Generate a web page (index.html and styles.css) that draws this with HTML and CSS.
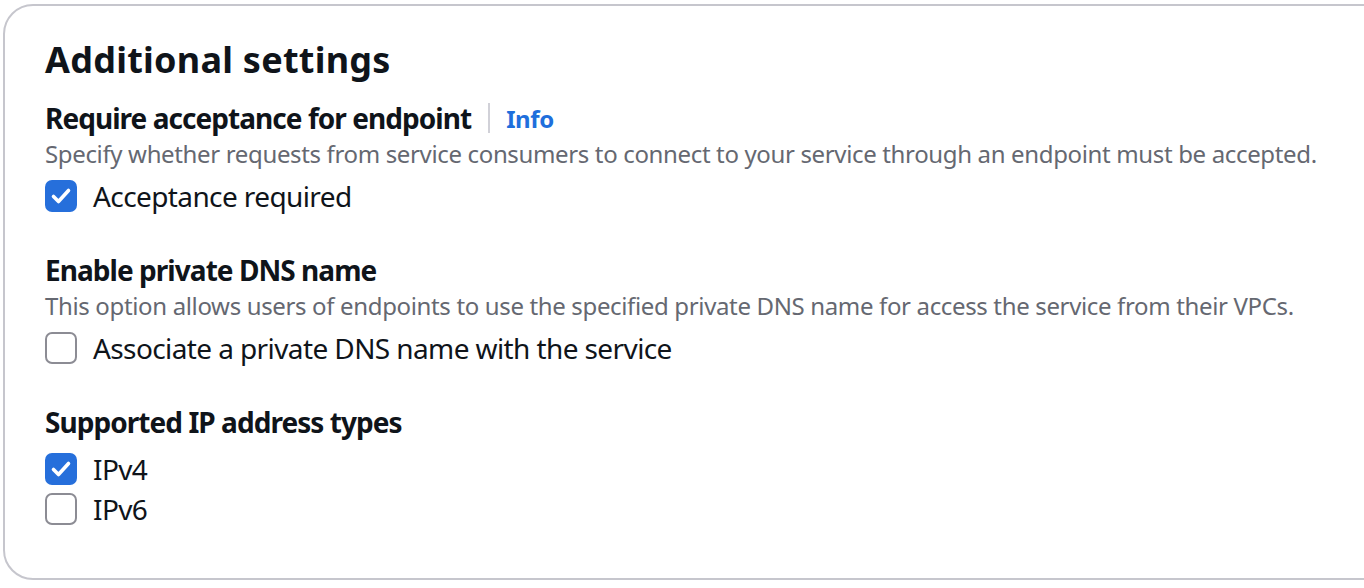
FILE: index.html
```html
<!DOCTYPE html>
<html lang="en">
<head>
<meta charset="utf-8">
<title>Additional settings</title>
<link rel="stylesheet" href="styles.css">
</head>
<body>
<section class="card">
  <h2 class="title">Additional settings</h2>

  <div class="field">
    <div class="label-row">
      <span class="label">Require acceptance for endpoint</span>
      <span class="divider"></span>
      <a class="info" href="#">Info</a>
    </div>
    <p class="desc">Specify whether requests from service consumers to connect to your service through an endpoint must be accepted.</p>
    <label class="check">
      <span class="box checked"><svg viewBox="0 0 32 32" width="32" height="32"><path d="M8.5 16.5l5 5 10-11" fill="none" stroke="#fff" stroke-width="3.6" stroke-linecap="round" stroke-linejoin="round"/></svg></span>
      <span class="check-text">Acceptance required</span>
    </label>
  </div>

  <div class="field">
    <div class="label-row">
      <span class="label">Enable private DNS name</span>
    </div>
    <p class="desc">This option allows users of endpoints to use the specified private DNS name for access the service from their VPCs.</p>
    <label class="check">
      <span class="box"></span>
      <span class="check-text">Associate a private DNS name with the service</span>
    </label>
  </div>

  <div class="field">
    <div class="label-row label-gap">
      <span class="label">Supported IP address types</span>
    </div>
    <label class="check tight">
      <span class="box checked"><svg viewBox="0 0 32 32" width="32" height="32"><path d="M8.5 16.5l5 5 10-11" fill="none" stroke="#fff" stroke-width="3.6" stroke-linecap="round" stroke-linejoin="round"/></svg></span>
      <span class="check-text">IPv4</span>
    </label>
    <label class="check tight">
      <span class="box"></span>
      <span class="check-text">IPv6</span>
    </label>
  </div>
</section>
</body>
</html>
```

FILE: styles.css
```css
html, body {
  margin: 0;
  padding: 0;
  background: #ffffff;
  overflow: hidden;
}

body {
  font-family: "Noto Sans", "Open Sans", Arial, sans-serif;
  color: #0f141a;
  width: 1364px;
  height: 588px;
}

.card {
  box-sizing: border-box;
  margin: 4px 0 0 3px;
  width: 1420px;
  height: 576px;
  border: 2px solid #c6c6cd;
  border-radius: 30px;
  padding: 32px 40px 0 40px;
  background: #fff;
}

.title {
  margin: 0;
  font-size: 36px;
  line-height: 44px;
  font-weight: 700;
  letter-spacing: 0.25px;
}

.field {
  margin-top: 18px;
}

.field + .field {
  margin-top: 36px;
}

.label-row {
  display: flex;
  align-items: center;
  height: 36px;
}

.label {
  font-size: 28px;
  line-height: 36px;
  font-weight: 700;
  letter-spacing: -0.95px;
}

.divider {
  width: 2px;
  height: 30px;
  background: #d1d1d8;
  margin: 0 16px 0 17px;
}

.info {
  font-size: 24px;
  font-weight: 700;
  color: #1f6fdc;
  text-decoration: none;
  letter-spacing: -0.4px;
}

.desc {
  margin: 2px 0 0 0;
  font-size: 24px;
  line-height: 32px;
  color: #656871;
  letter-spacing: -0.35px;
}

.check {
  display: flex;
  align-items: center;
  gap: 16px;
  height: 40px;
  margin-top: 6px;
}

.check.tight {
  margin-top: 0;
}

.label-gap + .check.tight {
  margin-top: 9px;
}

.box {
  box-sizing: border-box;
  width: 32px;
  height: 32px;
  border: 2px solid #8c8c94;
  border-radius: 7px;
  background: #fff;
  display: flex;
  flex: none;
}

.box.checked {
  border: none;
  background: #266fdb;
}

.check-text {
  font-size: 28px;
  line-height: 36px;
  letter-spacing: -0.6px;
}
```
